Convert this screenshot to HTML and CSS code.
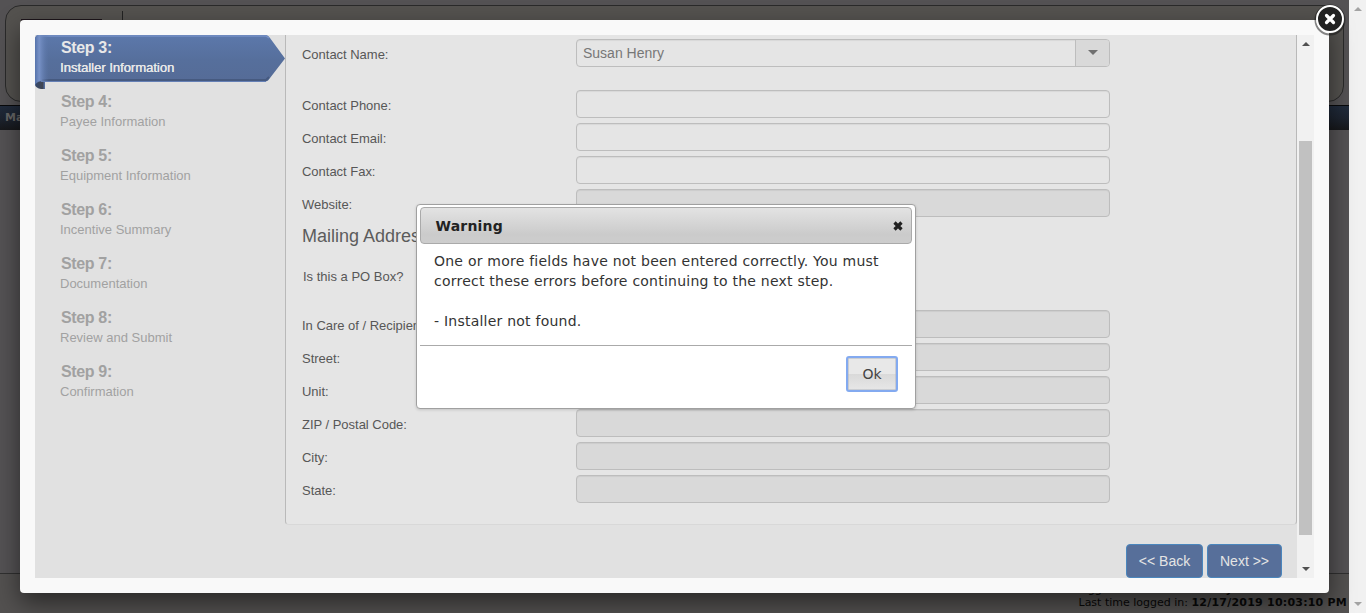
FILE: index.html
```
<!DOCTYPE html>
<html lang="en">
<head>
<meta charset="utf-8">
<title>Installer Information</title>
<link rel="stylesheet" href="styles.css">
</head>
<body>
<div class="page">
  <div class="site">
    <div class="banner"><span class="logo-edge"></span><span class="banner-divider"></span></div>
    <nav class="menu">Ma</nav>
    <footer class="site-footer">
      <div class="login-line cut">Logged in as: <b>Susan Henry</b></div>
      <div class="login-line">Last time logged in: <b>12/17/2019 10:03:10 PM</b></div>
    </footer>
  </div>
  <div class="page-scroll"><i class="up"></i><i class="down"></i></div>
</div>

<div class="lightbox">
  <div class="frame">
    <div class="wizard">
      <aside class="steps">
        <div class="step active">
          <svg class="ribbon" width="250" height="54" viewBox="0 0 250 54">
            <defs>
              <linearGradient id="rb" x1="0" y1="0" x2="0" y2="1"><stop offset="0" stop-color="#5c78ab"/><stop offset=".5" stop-color="#566f9c"/><stop offset="1" stop-color="#556b96"/></linearGradient>
              <linearGradient id="rl" x1="0" x2="1" y1="0" y2="0"><stop offset="0" stop-color="#5673ab"/><stop offset=".3" stop-color="#7892c7"/><stop offset="1" stop-color="#5a76aa" stop-opacity="0"/></linearGradient>
              <linearGradient id="rf" x1="0" x2="1" y1="0" y2="0"><stop offset="0" stop-color="#35486d"/><stop offset=".75" stop-color="#404652"/><stop offset="1" stop-color="#5875ae"/></linearGradient>
            </defs>
            <path d="M0 46H10V54H6Q1 53 0 50Z" fill="url(#rf)"/>
            <path d="M3 0H231Q233 0 235 3L250 23.500L235 43Q233 46.500 230 46.500H6Q2 46.500 0 50V3Q1 0 3 0Z" fill="url(#rb)"/>
            <path d="M3 1H231L234 3" fill="none" stroke="#7590c6" stroke-width="1.500"/>
            <path d="M7 45H231L234 42" fill="none" stroke="#465a80" stroke-width="2"/>
            <path d="M6 46.500H231" stroke="#6580b5" fill="none"/>
            <path d="M0 3Q1 0 3 0H14V46H6Q2 46 0 50Z" fill="url(#rl)"/>
          </svg>
          <div class="step-text"><b>Step 3:</b><span>Installer Information</span></div>
        </div>
        <div class="step"><b>Step 4:</b><span>Payee Information</span></div>
        <div class="step"><b>Step 5:</b><span>Equipment Information</span></div>
        <div class="step"><b>Step 6:</b><span>Incentive Summary</span></div>
        <div class="step"><b>Step 7:</b><span>Documentation</span></div>
        <div class="step"><b>Step 8:</b><span>Review and Submit</span></div>
        <div class="step"><b>Step 9:</b><span>Confirmation</span></div>
      </aside>
      <main class="main">
        <section class="panel">
          <div class="row name"><label>Contact Name:</label><div class="field select"><span>Susan Henry</span><div class="arrow"><i></i></div></div></div>
          <div class="row"><label>Contact Phone:</label><div class="field"></div></div>
          <div class="row"><label>Contact Email:</label><div class="field"></div></div>
          <div class="row"><label>Contact Fax:</label><div class="field"></div></div>
          <div class="row"><label>Website:</label><div class="field disabled"></div></div>
          <h2>Mailing Address</h2>
          <div class="po">Is this a PO Box?</div>
          <div class="row"><label>In Care of / Recipient:</label><div class="field disabled"></div></div>
          <div class="row"><label>Street:</label><div class="field disabled"></div></div>
          <div class="row"><label>Unit:</label><div class="field disabled"></div></div>
          <div class="row"><label>ZIP / Postal Code:</label><div class="field disabled"></div></div>
          <div class="row"><label>City:</label><div class="field disabled"></div></div>
          <div class="row"><label>State:</label><div class="field disabled"></div></div>
        </section>
        <div class="actions"><button>&lt;&lt; Back</button><button>Next &gt;&gt;</button></div>
      </main>
      <div class="scrollbar"><i class="up"></i><div class="thumb"></div><i class="down"></i></div>
    </div>
  </div>
  <svg class="close" width="36" height="36" viewBox="0 0 36 36">
    <circle cx="18" cy="19" r="14.500" fill="none" stroke="#111" stroke-opacity=".5" stroke-width="2"/>
    <circle cx="18" cy="18" r="13" fill="#222" stroke="#fff" stroke-width="2"/>
    <path d="M14.500 14.500L21.500 21.500M21.500 14.500L14.500 21.500" stroke="#fff" stroke-width="3.200" stroke-linecap="round"/>
  </svg>
</div>

<div class="dialog">
  <header>Warning
    <svg width="10" height="10" viewBox="0 0 10 10"><path d="M1.500 1.500L8.500 8.500M8.500 1.500L1.500 8.500" stroke="#222" stroke-width="3.200"/></svg>
  </header>
  <div class="message">One or more fields have not been entered correctly. You must<br>correct these errors before continuing to the next step.<br><br>- Installer not found.</div>
  <footer><button class="ok">Ok</button></footer>
</div>
</body>
</html>
```
FILE: styles.css
```
* { box-sizing: border-box; }
body { margin: 0; width: 1366px; height: 613px; overflow: hidden; position: relative; font-family: "Liberation Sans", Arial, sans-serif; }
.page { display: flex; width: 1366px; height: 613px; }
.site { width: 1349px; height: 613px; display: flex; flex-direction: column; background: #545254; font-family: "DejaVu Sans", Verdana, sans-serif; overflow: hidden; }
.banner { height: 97px; margin: 5px 5px 3px; border: 1px solid #2a2a2a; border-radius: 16px; background: #54524f; display: flex; padding: 5px 15px; }
.logo-edge { width: 81px; height: 2px; margin-top: 8px; background: #1d151b; }
.banner-divider { width: 1px; height: 40px; margin-left: 20px; background: #222; }
.menu { height: 25px; border-top: 1px solid #08090b; background: linear-gradient(#202b3c, #1d2430 50%, #17181b); color: #666; font-size: 11px; font-weight: bold; line-height: 23px; padding-left: 5px; }
.site-footer { margin-top: auto; height: 40px; border-top: 1px solid #303030; background: #535150; padding: 8px 2px 0; text-align: right; font-size: 11px; color: #080808; white-space: nowrap; }
.site-footer b { letter-spacing: .22px; }
.login-line { line-height: 14px; }
.cut { line-height: 16px; height: 14px; padding-right: 114px; }
.page-scroll { width: 17px; background: #f1f1f1; display: flex; flex-direction: column; justify-content: space-between; align-items: center; padding: 7px 0; }
.up, .down { width: 0; height: 0; border: 4px solid transparent; }
.up { border-top: 0; border-bottom-color: #505050; }
.down { border-bottom: 0; border-top-color: #505050; }
.page-scroll .up { border-bottom-color: #a3a3a3; }
.page-scroll .down { border-top-color: #a3a3a3; }

.lightbox { position: absolute; left: 20px; top: 20px; width: 1309px; height: 573px; }
.frame { height: 100%; padding: 15px; border-radius: 4px; background: #f9f9f9; box-shadow: 0 10px 25px rgba(0, 0, 0, .5); }
.close { position: absolute; right: -19px; top: -19px; }
.wizard { height: 543px; display: flex; background: #e1e1e1; overflow: hidden; }
.steps { width: 250px; }
.step { height: 54px; padding: 3px 0 0 25px; color: #a1a1a1; }
.step.active { display: grid; padding: 0; color: #e8e8e8; }
.ribbon, .step-text { grid-area: 1 / 1; }
.step-text { padding: 3px 0 0 25px; }
.step b { display: block; font-size: 16px; line-height: 20px; padding-left: 1px; letter-spacing: -.35px; }
.step span { display: block; font-size: 13px; line-height: 19px; }
.step.active span { text-shadow: .3px 0 #e8e8e8; }
.main { width: 1012px; }
.panel { height: 490px; border: 1px solid #b9b9b9; border-top: 0; border-bottom-color: #d8d8d8; border-radius: 0 0 4px 4px; background: #e5e5e5; padding: 4px 0 0 16px; }
.row { display: flex; height: 28px; margin-bottom: 5px; }
.row.name { margin-bottom: 23px; }
.row label { width: 274px; padding-top: 2px; font-size: 13px; line-height: 28px; color: #575757; letter-spacing: -.02px; }
.field { width: 534px; height: 28px; border: 1px solid #bdbdbd; border-radius: 4px; background: #e5e5e5; box-shadow: inset 0 1px 1px rgba(0, 0, 0, .06); }
.disabled { background: #d9d9d9; }
.select { display: flex; justify-content: space-between; padding-left: 6px; font-size: 14px; line-height: 26px; color: #777; overflow: hidden; }
.arrow { width: 34px; border-left: 1px solid #bdbdbd; background: #d9d9d9; padding: 10px 0 0 12px; }
.arrow i { display: block; width: 0; border: 5px solid transparent; border-top-color: #707070; border-bottom: 0; }
h2 { margin: -1px 0 0; height: 42px; padding-top: 4px; font-size: 18px; font-weight: normal; line-height: 22px; color: #5c5c5c; }
.po { height: 47px; margin: 5px 0 -5px; padding: 1px 0 0 1px; font-size: 13px; line-height: 16px; color: #575757; }
.actions { display: flex; justify-content: flex-end; gap: 4px; padding: 19px 15px 0 0; }
.actions button { width: 77px; height: 34px; padding: 0; border: 1px solid #4a86bd; border-radius: 4px; background: #576f9a; color: #e4e4e4; font: 14px "Liberation Sans", Arial, sans-serif; }
.actions button + button { width: 75px; }
.scrollbar { width: 17px; background: #f1f1f1; display: flex; flex-direction: column; align-items: center; padding: 7px 0; }
.thumb { width: 13px; height: 394px; margin-top: 95px; background: #c1c1c1; }
.scrollbar .down { margin-top: auto; }

.dialog { position: absolute; left: 416px; top: 204px; width: 500px; height: 205px; padding: 3px; border: 1px solid #a0a0a0; border-radius: 4px; background: #fff; box-shadow: 0 1px 3px rgba(0, 0, 0, .15); font-family: "DejaVu Sans", Verdana, sans-serif; color: #333; font-size: 14px; }
.dialog header { margin-top: -1px; height: 37px; border: 1px solid #aaa; border-radius: 4px; background: linear-gradient(#e3e3e3, #cbcbcb 75%, #cdcdcd); display: flex; align-items: center; justify-content: space-between; padding: 0 8px 0 14.5px; font-weight: bold; color: #222; letter-spacing: .2px; }
.message { height: 102px; padding: 7px 0 0 14px; line-height: 20px; border-bottom: 1px solid #aaa; white-space: nowrap; letter-spacing: .23px; }
.dialog footer { display: flex; justify-content: flex-end; padding: 10px 14px; }
.ok { width: 52px; height: 36px; border: 2px solid #83aaf0; border-radius: 3px; background: linear-gradient(#e8e8e8 50%, #d9d9d9 50%, #e7e7e7); box-shadow: inset 0 0 0 .5px #aeb3bd; color: #444; padding: 0; font: 14px "DejaVu Sans", Verdana, sans-serif; }
```
